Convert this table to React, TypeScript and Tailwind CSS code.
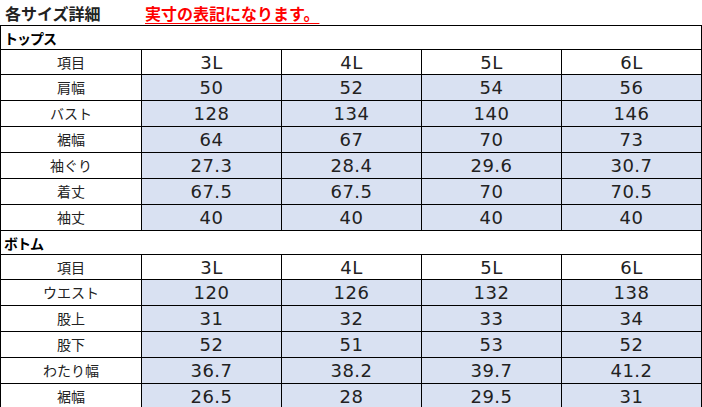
import React from 'react';

const SIZES = ['3L', '4L', '5L', '6L'];

const tops: [string, string[]][] = [
  ['肩幅', ['50', '52', '54', '56']],
  ['バスト', ['128', '134', '140', '146']],
  ['裾幅', ['64', '67', '70', '73']],
  ['袖ぐり', ['27.3', '28.4', '29.6', '30.7']],
  ['着丈', ['67.5', '67.5', '70', '70.5']],
  ['袖丈', ['40', '40', '40', '40']],
];

const bottoms: [string, string[]][] = [
  ['ウエスト', ['120', '126', '132', '138']],
  ['股上', ['31', '32', '33', '34']],
  ['股下', ['52', '51', '53', '52']],
  ['わたり幅', ['36.7', '38.2', '39.7', '41.2']],
  ['裾幅', ['26.5', '28', '29.5', '31']],
];

const jp = "font-['Noto_Sans_CJK_JP',sans-serif]";
const num = "font-['DejaVu_Sans','Noto_Sans_CJK_JP',sans-serif] text-[18px] tracking-[0.5px] text-[#222]";

function SectionHeader({ title }: { title: string }) {
  return (
    <div className={`col-span-5 h-[24px] border-r border-b border-black flex items-center pl-[3px] ${jp} text-[14px] font-bold tracking-[-1px] leading-none text-black`}>
      {title}
    </div>
  );
}

function SizeRow() {
  return (
    <>
      <div className={`h-[25px] border-r border-b border-black flex items-center justify-center ${jp} text-[14px] text-[#222]`}>
        項目
      </div>
      {SIZES.map((s) => (
        <div key={s} className={`h-[25px] border-r border-b border-black flex items-center justify-center ${num}`}>
          {s}
        </div>
      ))}
    </>
  );
}

function DataRows({ rows }: { rows: [string, string[]][] }) {
  return (
    <>
      {rows.map(([label, values]) => (
        <React.Fragment key={label}>
          <div className={`h-[26px] border-r border-b border-black flex items-center justify-center ${jp} text-[14px] text-[#222]`}>
            {label}
          </div>
          {values.map((v, i) => (
            <div key={i} className={`h-[26px] border-r border-b border-black bg-[#d9e1f2] flex items-center justify-center ${num}`}>
              {v}
            </div>
          ))}
        </React.Fragment>
      ))}
    </>
  );
}

export default function App() {
  return (
    <div className="w-[702px] h-[407px] overflow-hidden bg-white">
      {/* Title */}
      <div className={`h-[25px] flex items-center ${jp} leading-none`}>
        <span className="ml-[5px] w-[140px] text-[16px] font-bold text-[#222]">各サイズ詳細</span>
        <span className="text-[16px] font-bold text-[#ff0000] underline underline-offset-[3px]">
          実寸の表記になります。
        </span>
      </div>

      {/* Table */}
      <div className="grid grid-cols-[141px_140px_140px_140px_140px] border-l border-t border-black">
        <SectionHeader title="トップス" />
        <SizeRow />
        <DataRows rows={tops} />
        <SectionHeader title="ボトム" />
        <SizeRow />
        <DataRows rows={bottoms} />
      </div>
    </div>
  );
}
